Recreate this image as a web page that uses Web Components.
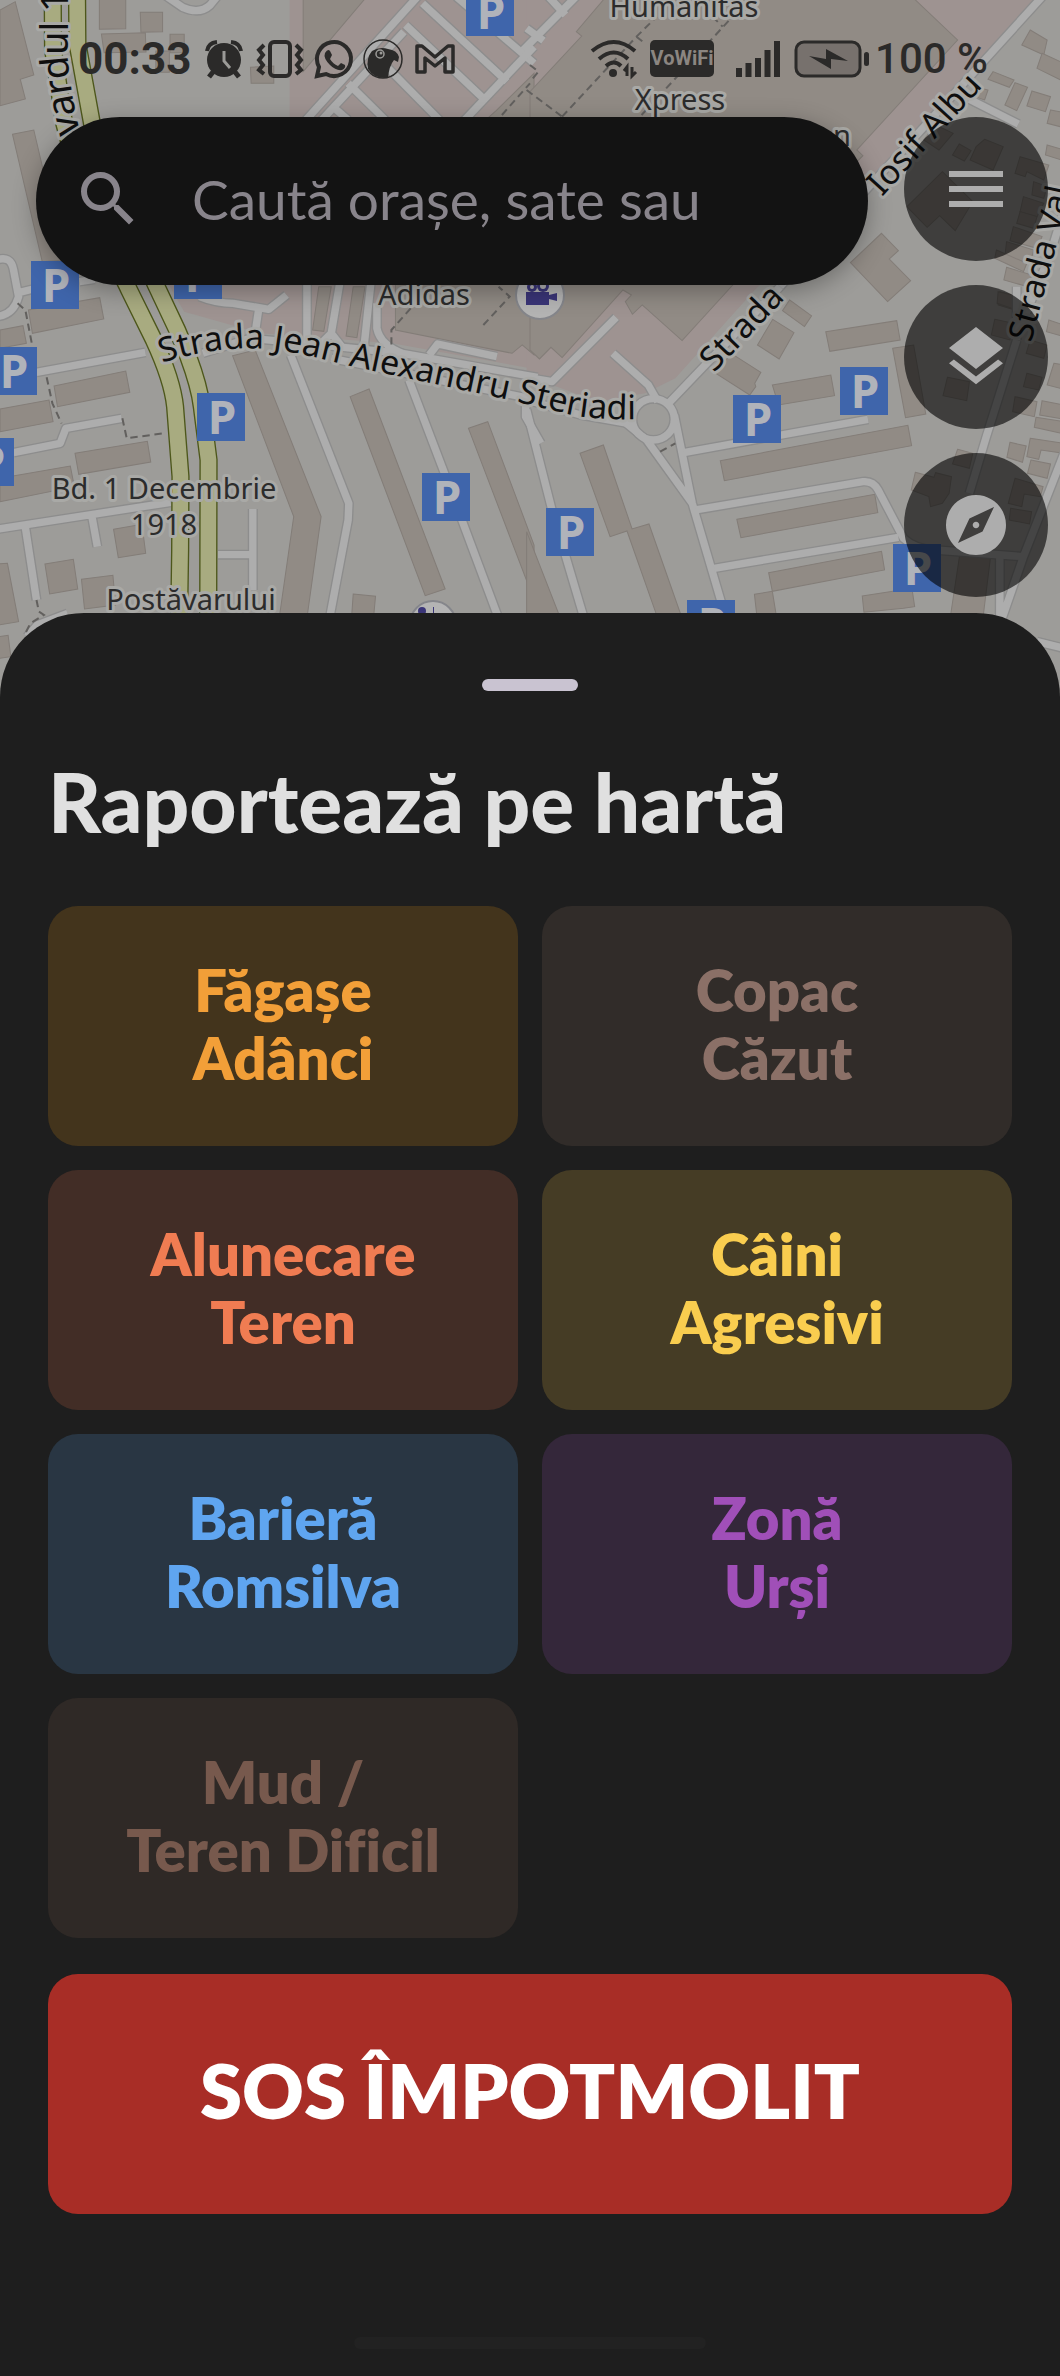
<!DOCTYPE html>
<html lang="ro">
  <head>
    <meta charset="UTF-8" />
    <meta name="viewport" content="width=device-width, initial-scale=1.0" />
    <title>Raportează pe hartă</title>
    <style>
      body {
        margin: 0;
        min-height: 100vh;
        display: flex;
        flex-direction: column;
        background: #1e1e1e;
        font-family: Lato, "Open Sans", sans-serif;
        font-variant-ligatures: none;
      }
      report-sheet {
        flex: 1;
      }
    </style>
  </head>
  <body>
    <map-screen>
      <street-map slot="map"></street-map>
      <status-bar slot="status" time="00:33" battery="100 %"></status-bar>
      <search-bar slot="search" hint="Caută orașe, sate sau"></search-bar>
      <round-button slot="tools" icon="menu" label="Meniu"></round-button>
      <round-button slot="tools" icon="layers" label="Straturi"></round-button>
      <round-button slot="tools" icon="compass" label="Busolă"></round-button>
    </map-screen>

    <report-sheet>
      <span slot="title">Raportează pe hartă</span>
      <report-tile color="#f29f38" fill="#43341c">Făgașe<br />Adânci</report-tile>
      <report-tile color="#8b7067" fill="#312c29">Copac<br />Căzut</report-tile>
      <report-tile color="#f07c52" fill="#422d26">Alunecare<br />Teren</report-tile>
      <report-tile color="#f9cd4f" fill="#453c25">Câini<br />Agresivi</report-tile>
      <report-tile color="#5fa5f0" fill="#293643">Barieră<br />Romsilva</report-tile>
      <report-tile color="#a04fb8" fill="#34273a">Zonă<br />Urși</report-tile>
      <report-tile color="#77594d" fill="#2f2926">Mud /<br />Teren Dificil</report-tile>
      <report-tile slot="sos" size="large" color="#ffffff" fill="#a82d26">SOS ÎMPOTMOLIT</report-tile>
    </report-sheet>

    <script>
      // Map area with the floating controls on top of it
      class MapScreen extends HTMLElement {
        constructor() {
          super();
          this.attachShadow({ mode: "open" });
          this.shadowRoot.innerHTML = `
            <style>
              :host {
                display: block;
                position: relative;
                overflow: hidden;
                padding-bottom: 100px;
              }
              .map {
                position: absolute;
                inset: 0;
              }
              .content {
                position: relative;
              }
              .controls {
                display: flex;
                align-items: flex-start;
                gap: 36px;
                padding: 0 12px 0 36px;
              }
              .search {
                flex: 1;
                min-width: 0;
              }
              .tools {
                display: flex;
                flex-direction: column;
                gap: 24px;
              }
            </style>
            <div class="map"><slot name="map"></slot></div>
            <div class="content">
              <slot name="status"></slot>
              <div class="controls">
                <div class="search"><slot name="search"></slot></div>
                <div class="tools"><slot name="tools"></slot></div>
              </div>
            </div>
          `;
        }
      }
      customElements.define("map-screen", MapScreen);

      // Phone status bar
      class StatusBar extends HTMLElement {
        constructor() {
          super();
          this.attachShadow({ mode: "open" });
        }

        connectedCallback() {
          this.shadowRoot.innerHTML = `
            <style>
              :host {
                display: flex;
                justify-content: space-between;
                align-items: center;
                height: 117px;
                padding: 0 72px 0 78px;
                box-sizing: border-box;
                color: #2b2a29;
                font-family: Roboto, sans-serif;
                font-size: 44px;
                font-weight: 700;
                line-height: 48px;
              }
              div {
                display: flex;
                align-items: center;
                gap: 12px;
              }
              svg {
                display: block;
                flex: none;
                overflow: visible;
              }
              .battery {
                font-size: 42px;
                font-weight: 500;
              }
              .vowifi {
                background: #2b2a29;
                color: #8b8681;
                border-radius: 5px;
                width: 64px;
                height: 37px;
                margin-right: 10px;
                font: 700 20px/37px Roboto, sans-serif;
                text-align: center;
              }
              .power {
                gap: 4px;
              }
            </style>
            <div>
              <span>${this.getAttribute("time")}</span>
              <svg width="38" height="40" viewBox="-2 0 38 40">
                <circle cx="19" cy="21" r="17" fill="currentColor" />
                <path d="M2 12Q3 4 12 3M36 12Q35 4 26 3" fill="none" stroke="currentColor" stroke-width="4" />
                <path d="M8 33L4 38M30 33L34 38" stroke="currentColor" stroke-width="5" />
                <path d="M19 12V22L25 29" fill="none" stroke="#9b9a97" stroke-width="3" />
              </svg>
              <svg width="46" height="40" viewBox="-4 0 46 40">
                <rect x="13" y="3" width="20" height="34" rx="4" fill="none" stroke="currentColor" stroke-width="4" />
                <path d="M7 6L2 11L6 16L2 21L6 26L2 31L7 35M39 6L44 11L40 16L44 21L40 26L44 31L39 35" fill="none" stroke="currentColor" stroke-width="4" />
              </svg>
              <svg width="40" height="40" viewBox="-3 0 40 40">
                <path d="M3 37L5 28A17 17 0 1 1 12 35Z" fill="none" stroke="currentColor" stroke-width="4" />
                <path d="M11 14Q14 9 16 12L18 16L16 20Q19 25 24 27L27 24L31 26Q32 29 28 31Q22 32 16 26Q9 19 11 14Z" fill="currentColor" />
              </svg>
              <svg width="40" height="40" viewBox="0 0 40 40">
                <circle cx="20" cy="20" r="19" fill="none" stroke="currentColor" stroke-width="1.5" />
                <path d="M5 30Q3 19 9 12Q17 7 25 10Q34 11 36 18L35 23L31 21Q26 27 25 39Q11 40 5 30Z" fill="currentColor" />
                <circle cx="17" cy="15" r="4" fill="none" stroke="#9b9a97" stroke-width="1.5" />
                <circle cx="18" cy="14" r="1.5" fill="#9b9a97" />
              </svg>
              <svg width="40" height="32" viewBox="0 0 40 32">
                <path d="M2 29V3H7L20 14L33 3H38V29H30V15L20 23L10 15V29Z" fill="none" stroke="currentColor" stroke-width="3.5" stroke-linejoin="round" />
              </svg>
            </div>
            <div>
              <svg width="48" height="38" viewBox="0 0 48 38">
                <path d="M2 11Q24 -7 45 11M9 19Q24 6 38 19M16 26Q24 19 31 26" fill="none" stroke="currentColor" stroke-width="4" />
                <circle cx="23" cy="33" r="4" fill="currentColor" />
                <path d="M37 36V27L34 31M42 27V36L46 32" fill="none" stroke="currentColor" stroke-width="3" />
              </svg>
              <span class="vowifi">VoWiFi</span>
              <svg width="45" height="38" viewBox="0 0 45 38">
                <path d="M3 37V28M12.500 37V23M22 37V18M31.500 37V10M41 37V1" stroke="currentColor" stroke-width="6" />
              </svg>
              <div class="power">
                <svg width="78" height="38" viewBox="0 0 78 38">
                  <rect x="3" y="2" width="64" height="34" rx="8" fill="#77716d" stroke="currentColor" stroke-width="3" />
                  <path d="M16 16L33 19V9L55 21L38 19V29Z" fill="currentColor" />
                  <rect x="71" y="12" width="5" height="14" rx="2.500" fill="currentColor" />
                </svg>
                <span class="battery">${this.getAttribute("battery")}</span>
              </div>
            </div>
          `;
        }
      }
      customElements.define("status-bar", StatusBar);

      // Search pill
      class SearchBar extends HTMLElement {
        constructor() {
          super();
          this.attachShadow({ mode: "open" });
        }

        connectedCallback() {
          const hint = this.getAttribute("hint") || "";
          this.shadowRoot.innerHTML = `
            <style>
              :host {
                display: block;
              }
              label {
                display: flex;
                align-items: center;
                gap: 48px;
                height: 168px;
                padding: 0 36px 4px;
                box-sizing: border-box;
                border-radius: 84px;
                background: #131313;
                box-shadow: 0 6px 24px rgba(0, 0, 0, 0.3);
                color: #88848b;
              }
              svg {
                flex: none;
              }
              input {
                flex: 1;
                min-width: 0;
                padding: 0;
                border: 0;
                outline: 0;
                background: none;
                color: inherit;
                font: 400 55px/72px Lato, sans-serif;
              }
              input::placeholder {
                color: inherit;
                opacity: 1;
              }
            </style>
            <label>
              <svg width="72" height="72" viewBox="0 0 24 24" fill="currentColor" aria-hidden="true">
                <path d="M15.500 14h-.79l-.28-.27A6.470 6.470 0 0 0 16 9.500 6.500 6.500 0 1 0 9.500 16c1.610 0 3.090-.59 4.230-1.570l.27.28v.79l5 4.990L20.490 19l-4.990-5zm-6 0C7.010 14 5 11.990 5 9.500S7.010 5 9.500 5 14 7.010 14 9.500 11.990 14 9.500 14z" />
              </svg>
              <input type="text" aria-label="${hint}" placeholder="${hint}" />
            </label>
          `;
        }
      }
      customElements.define("search-bar", SearchBar);

      // Round button floating on the map
      const ICONS = {
        menu: "M3 18h18v-2H3v2zm0-5h18v-2H3v2zm0-7v2h18V6H3z",
        layers:
          "M11.990 18.540l-7.370-5.730L3 14.070l9 7 9-7-1.630-1.270-7.380 5.740zM12 16l7.360-5.730L21 9l-9-7-9 7 1.630 1.270L12 16z",
        compass:
          "M12 10.900c-.61 0-1.100.49-1.100 1.100s.49 1.100 1.100 1.100c.61 0 1.100-.49 1.100-1.100s-.49-1.100-1.100-1.100zM12 2C6.480 2 2 6.480 2 12s4.480 10 10 10 10-4.480 10-10S17.520 2 12 2zm2.190 12.190L6 18l3.810-8.190L18 6l-3.810 8.190z",
      };

      class RoundButton extends HTMLElement {
        constructor() {
          super();
          this.attachShadow({ mode: "open" });
        }

        connectedCallback() {
          this.shadowRoot.innerHTML = `
            <style>
              :host {
                display: block;
              }
              button {
                display: flex;
                align-items: center;
                justify-content: center;
                width: 144px;
                height: 144px;
                padding: 0;
                border: 0;
                border-radius: 50%;
                background: rgba(0, 0, 0, 0.6);
                color: #adadad;
              }
            </style>
            <button type="button" aria-label="${this.getAttribute("label")}">
              <svg width="72" height="72" viewBox="0 0 24 24" fill="currentColor" aria-hidden="true">
                <path d="${ICONS[this.getAttribute("icon")]}" />
              </svg>
            </button>
          `;
        }
      }
      customElements.define("round-button", RoundButton);

      // Bottom sheet
      class ReportSheet extends HTMLElement {
        constructor() {
          super();
          this.attachShadow({ mode: "open" });
          this.shadowRoot.innerHTML = `
            <style>
              :host {
                display: flex;
                flex-direction: column;
                position: relative;
                box-sizing: border-box;
                margin-top: -84px;
                padding: 66px 48px 27px;
                border-radius: 84px 84px 0 0;
                background: #1e1e1e;
              }
              .handle {
                align-self: center;
                width: 96px;
                height: 12px;
                border-radius: 6px;
                background: #c9c3d1;
              }
              h1 {
                margin: 62px 0 57px;
                color: #e0e0e0;
                font-size: 82px;
                font-weight: 900;
                line-height: 96px;
              }
              .grid {
                display: grid;
                grid-template-columns: 1fr 1fr;
                gap: 24px;
                margin-bottom: 36px;
              }
              .home {
                align-self: center;
                width: 352px;
                height: 12px;
                margin-top: auto;
                border-radius: 6px;
                background: #222222;
              }
            </style>
            <div class="handle"></div>
            <h1><slot name="title"></slot></h1>
            <div class="grid"><slot></slot></div>
            <slot name="sos"></slot>
            <div class="home"></div>
          `;
        }
      }
      customElements.define("report-sheet", ReportSheet);

      // One report category
      class ReportTile extends HTMLElement {
        constructor() {
          super();
          this.attachShadow({ mode: "open" });
        }

        connectedCallback() {
          this.shadowRoot.innerHTML = `
            <style>
              :host {
                display: block;
              }
              button {
                width: 100%;
                min-height: 240px;
                padding: 0 24px 4px;
                border: 0;
                border-radius: 30px;
                background: ${this.getAttribute("fill")};
                color: ${this.getAttribute("color")};
                font-family: inherit;
                font-size: 58px;
                font-weight: 800;
                font-variant-ligatures: none;
                line-height: 68px;
              }
              :host([size="large"]) button {
                padding-bottom: 8px;
                font-size: 76px;
                line-height: 96px;
              }
            </style>
            <button type="button"><slot></slot></button>
          `;
        }
      }
      customElements.define("report-tile", ReportTile);

      // Street map. The shapes are kept in four quarters, each with its own grid.
      const QUARTERS = [
        {
          at: "0 0",
          pink: "857,-10 1580,-10 1580,1107 1160,1030 770,1000 545,935 500,855 857,855",
          buildings: [
            "0,30 45,5 100,225 60,238 75,297 0,317",
            "294,-10 372,-10 372,86 294,88",
            "415,37 481,37 481,95 417,97",
            "300,102 430,98 432,156 308,158",
            "503,103 545,103 545,158 503,158",
            "461,153 501,153 501,217 461,217",
            "741,202 810,198 810,250 743,250",
            "37,403 100,390 190,780 125,785",
            "84,930 295,893 307,957 96,1000",
            "897,-10 1085,-10 985,110 897,215",
            "1468,332 1580,220 1580,1065 1545,1035 1515,1060 1170,990 1170,600",
          ],
          roads: [
            "M480 -20L540 22Q590 45 622 15L650 -20",
            "M-10 780Q32 765 40 810L55 890Q40 945 -10 950M55 878L95 868M235 845L280 838",
            "M905 360L1240 -15M950 362L1195 95",
            "M985 320L1030 360M1030 250L1140 360M1110 165L1300 360M1200 75L1440 305M1250 10L1500 245M1350 -10L1580 190",
            "M1370 365L1580 140",
          ],
          dashed: ["M1485 345L1568 250", "M1430 975L1508 890L1475 860"],
        },
        {
          at: "530 0",
          pink: "-10,-10 1500,-10 1180,345 985,560 665,870 430,1135 340,1180 200,1205 80,1160 -10,1140",
          buildings: [
            "225,-10 137,95 153,108 0,275 0,1050 28,1077 62,1042 95,1073 275,870 300,885 282,905 303,943 332,915 450,1022 600,855 985,467 967,450 1265,120 1130,-10",
            "1480,90 1530,120 1520,165 1455,135",
            "1515,160 1580,190 1580,245 1500,205",
            "1370,215 1432,240 1418,262 1355,238",
            "1435,248 1472,262 1440,332 1405,315",
            "1485,273 1540,290 1525,335 1470,318",
            "1540,330 1580,338 1580,383 1530,370",
            "1310,258 1355,270 1345,300 1315,290",
            "1200,375 1252,400 1210,450 1165,420",
            "1270,432 1305,452 1285,483 1250,465",
            "1345,418 1400,440 1370,510 1302,480 1320,440",
            "1220,515 1310,605 1258,692 1212,647 1175,682 1115,620",
            "1450,470 1535,495 1520,540 1470,515 1465,530 1435,520",
            "1490,545 1530,560 1520,595 1485,585",
            "1460,590 1520,610 1500,650 1450,635",
            "1450,635 1500,650 1490,685 1440,670",
            "1430,680 1515,710 1500,745 1420,722",
            "1410,725 1490,750 1480,790 1405,770",
            "1380,750 1470,790 1460,815 1375,775",
            "1410,802 1500,830 1490,865 1402,840",
            "1390,875 1460,895 1450,935 1385,915",
            "1530,435 1580,450 1580,482 1525,465",
            "1040,700 1090,752 1063,777 1126,842 1058,905 948,788",
            "768,900 833,948 812,980 747,932",
          ],
          roads: [
            "M-20 150L185 -60M-10 85L40 122M55 -10L105 45",
            "M1520 -15L1180 365L985 580L740 860",
            "M1300 298L1445 372",
            "M1600 560L1540 760L1440 1010",
          ],
          dashed: [
            "M95 350L315 110L375 50M-10 270L95 350M315 110L340 130",
            "M330 345L590 60M540 50L570 80M0 195L25 215L0 245",
          ],
        },
        {
          at: "0 290",
          buildings: [
            "0,120 68,107 78,160 0,175",
            "160,288 372,243 384,307 170,350",
            "0,357 145,330 157,395 0,425",
            "222,490 436,454 446,516 233,553",
            "0,565 208,528 220,590 0,635",
            "336,718 420,703 431,790 350,803",
            "133,822 217,808 230,897 147,912",
            "241,868 334,856 342,945 250,957",
            "-5,822 22,820 55,995 -5,1005",
            "-5,1040 24,1036 32,1100 -5,1106",
            "688,197 755,180 950,680 908,985 826,985 869,680",
            "1036,320 1092,297 1317,897 1258,917",
            "1386,415 1443,395 1580,765 1580,930",
            "1045,912 1111,919 1105,985 1040,985",
            "925,120 943,-10 980,-10 958,124",
            "1024,138 1045,-10 1080,-10 1056,143",
          ],
          roads: [
            "M108 247L430 187",
            "M40 488L178 460L195 415L360 385",
            "M-10 718L505 637M75 712L108 930M272 680L288 770",
            "M748 657V900M645 794H738",
            "M860 195L1032 640L1030 690L975 985",
            "M1210 270L1315 550L1475 985",
            "M600 190L740 145L900 160L1190 190L1590 262M980 205L1590 330",
            "M1555 330V380L1600 460",
            "M908 -20V150M1005 -20L980 130L945 165M980 130L1015 175M1097 -20L1077 170M1115 40V115Q1125 165 1190 190",
            "M590 20Q640 40 690 40L795 58L848 15M765 60L757 115",
            "M1270 195L1295 162L1470 200",
            "M80 1040L110 1005L200 970",
          ],
          dashed: [
            "M52 40L75 60L95 165M138 262L155 340L182 400",
            "M362 385L375 445L485 430M1215 55L1158 120V165",
            "M108 930L115 965L130 975L90 1000L75 1030",
          ],
        },
        {
          at: "530 290",
          buildings: [
            "875,125 1085,92 1095,150 887,184",
            "718,88 781,128 737,207 673,165",
            "550,250 595,190 683,247 665,280 668,290 650,315",
            "717,285 890,255 901,317 735,345",
            "1073,175 1135,165 1171,372 1111,383",
            "563,512 1118,406 1129,467 575,572",
            "612,688 1020,613 1029,668 624,743",
            "706,848 1040,784 1049,840 717,904",
            "664,913 717,904 730,985 672,985",
            "983,918 1130,895 1138,950 1105,955 988,967",
            "148,490 217,465 302,717 352,702 450,985 378,985 287,723 237,740",
            "-10,725 90,985 -10,985",
            "1235,262 1300,275 1292,332 1222,317",
            "1385,5 1450,20 1440,60 1382,40",
            "1375,88 1430,100 1420,150 1365,135",
            "1480,150 1530,165 1520,205 1468,190",
            "1470,250 1515,262 1505,300 1460,290",
            "1435,320 1500,335 1492,380 1428,365",
            "1515,332 1580,345 1580,388 1508,375",
            "1497,382 1580,395 1580,432 1492,412",
            "1535,90 1580,105 1580,140 1528,125",
            "1550,220 1580,225 1580,298 1530,285",
            "1420,457 1468,468 1457,517 1411,502",
            "1480,445 1580,460 1580,490 1512,480 1505,508 1470,500",
            "1482,510 1540,522 1530,565 1472,550",
            "1265,478 1310,490 1300,535 1250,522",
            "1140,547 1195,562 1200,548 1247,560 1240,610 1220,640 1185,650 1180,620 1128,600",
            "1435,565 1518,590 1510,620 1462,612 1455,650 1415,640",
            "1422,655 1484,665 1478,702 1418,690",
            "1272,790 1362,805 1340,985 1243,985",
          ],
          roads: [
            "M740 -10L410 340M245 190L350 285L378 335",
            "M-10 262L65 275L255 82",
            "M-10 330L150 375L290 400",
            "M427 375L480 640L580 985M285 400L345 450L480 640",
            "M455 488L1000 388",
            "M490 660L985 575Q1015 572 1030 600L1105 745Q1140 778 1200 780L1460 800",
            "M545 835L1090 742",
            "M-10 360L65 660L160 985",
            "M1440 150L1350 440L1300 610M1580 490L1460 800L1395 990M1390 800V985",
            "M1440 -10V150",
            "M1500 1055L1580 1075",
            "M427 388A62 62 0 1 1 303 388A62 62 0 1 1 427 388",
          ],
          dashed: ["M385 485L430 460"],
        },
      ];

      const BOULEVARD = [
        "M156 -10L157 150L190 370L250 600L375 855L382 870L455 1020Q510 1140 518 1220L534 1430L533 1650L530 1850",
        "M228 -10L229 130L272 370L330 560L461 855L524 990L557 1070Q590 1160 597 1220L617 1380L616 1850",
      ];

      // Top left corners of the parking signs
      const PARKING = [
        [466, -12], [31, 261], [174, 251], [-11, 347], [-34, 438], [197, 393],
        [422, 473], [546, 508], [733, 395], [840, 367], [893, 544], [687, 600],
      ];

      const PLACES = [
        ["Humanitas", 684, 17],
        ["Xpress", 680, 110],
        ["n", 842, 146],
        ["Adidas", 424, 305],
        ["Bd. 1 Decembrie", 164, 499],
        ["1918", 164, 535],
        ["Postăvarului", 191, 610],
      ];

      const STREETS = [
        ["Strada Jean Alexandru Steriadi", "M162 363Q217 345 270 349Q302 353 350 366L500 398L560 412Q590 421 650 419"],
        ["Iosif Albu", "M882 197L998 70"],
        ["Strada", "M714 373L802 281"],
        ["Strada Val", "M1031 343L1058 240Q1070 200 1085 110"],
        ["vardul 1", "M80 133Q70 90 68 60V-40", "major"],
      ];

      class StreetMap extends HTMLElement {
        constructor() {
          super();
          this.attachShadow({ mode: "open" });
        }

        connectedCallback() {
          this.render();
        }

        paths(list, cls) {
          return list.map((d) => `<path class="${cls}" d="${d}" />`).join("");
        }

        layer(draw) {
          return QUARTERS.map(
            (q) => `<g transform="translate(${q.at}) scale(0.338 0.3333)">${draw(q)}</g>`
          ).join("");
        }

        render() {
          const parking = PARKING.map(
            ([x, y]) => `
              <rect class="sign" x="${x}" y="${y}" width="48" height="48" />
              <text class="p" x="${x + 25}" y="${y + 41}">P</text>`
          ).join("");
          const places = PLACES.map(
            ([name, x, y]) => `<text class="place" x="${x}" y="${y}">${name}</text>`
          ).join("");
          const streets = STREETS.map(
            ([name, d, kind = ""], i) => `
              <path id="street${i}" d="${d}" fill="none" />
              <text class="street ${kind}"><textPath href="#street${i}">${name}</textPath></text>`
          ).join("");

          this.shadowRoot.innerHTML = `
            <style>
              :host {
                display: block;
                height: 100%;
                background: #9d9c99;
              }
              svg {
                display: block;
                width: 100%;
                height: 100%;
              }
              .pink { fill: #9e9391; }
              .building { fill: #918b85; stroke: #837d78; stroke-width: 3; }
              .case, .road { fill: none; stroke-linejoin: round; }
              .case { stroke: #8d8d8d; stroke-width: 30; }
              .road { stroke: #adadad; stroke-width: 22; }
              .dash { fill: none; stroke: #62605e; stroke-width: 6; stroke-dasharray: 22 14; }
              .main-case { fill: none; stroke: #4d571b; stroke-width: 54; }
              .main { fill: none; stroke: #a8ab80; stroke-width: 46; }
              .sign { fill: #3f65ab; }
              text {
                font-family: "Noto Sans", sans-serif;
                paint-order: stroke;
                stroke: #a9a9a6;
                stroke-width: 6px;
                stroke-linejoin: round;
              }
              .p {
                fill: #b0b3ba;
                stroke: none;
                font-size: 46px;
                font-weight: 700;
                text-anchor: middle;
              }
              .place { fill: #2c2c2c; font-size: 29px; text-anchor: middle; }
              .street { fill: #0f0f0f; font-size: 34px; }
              .major { font-size: 38px; }
            </style>
            <svg viewBox="0 0 1060 697" preserveAspectRatio="xMidYMin slice">
              ${this.layer((q) => (q.pink ? `<polygon class="pink" points="${q.pink}" />` : ""))}
              ${this.layer((q) => q.buildings.map((p) => `<polygon class="building" points="${p}" />`).join(""))}
              ${this.layer((q) => this.paths(q.roads, "case"))}
              ${this.layer((q) => this.paths(q.roads, "road"))}
              ${this.layer((q) => this.paths(q.dashed, "dash"))}
              <g transform="scale(0.338 0.3333)">
                ${this.paths(BOULEVARD, "main-case")}
                ${this.paths(BOULEVARD, "main")}
              </g>
              <g stroke="#85868b" stroke-width="2" fill="#b4b4b4">
                <circle cx="540" cy="295" r="24" />
                <circle cx="433" cy="624" r="23" />
              </g>
              <g fill="#3a3578">
                <path d="M526 292H549V295L557 293V301L549 299V305H526Z" />
                <circle cx="532" cy="287" r="5" />
                <circle cx="543" cy="286" r="6" />
                <circle cx="532" cy="287" r="2" fill="#b4b4b4" />
                <circle cx="543" cy="286" r="3" fill="#b4b4b4" />
                <circle cx="422" cy="611" r="4" />
                <path d="M433 607h1v7h-1z" />
              </g>
              ${places}
              ${streets}
              ${parking}
            </svg>
          `;
        }
      }
      customElements.define("street-map", StreetMap);
    </script>
  </body>
</html>
